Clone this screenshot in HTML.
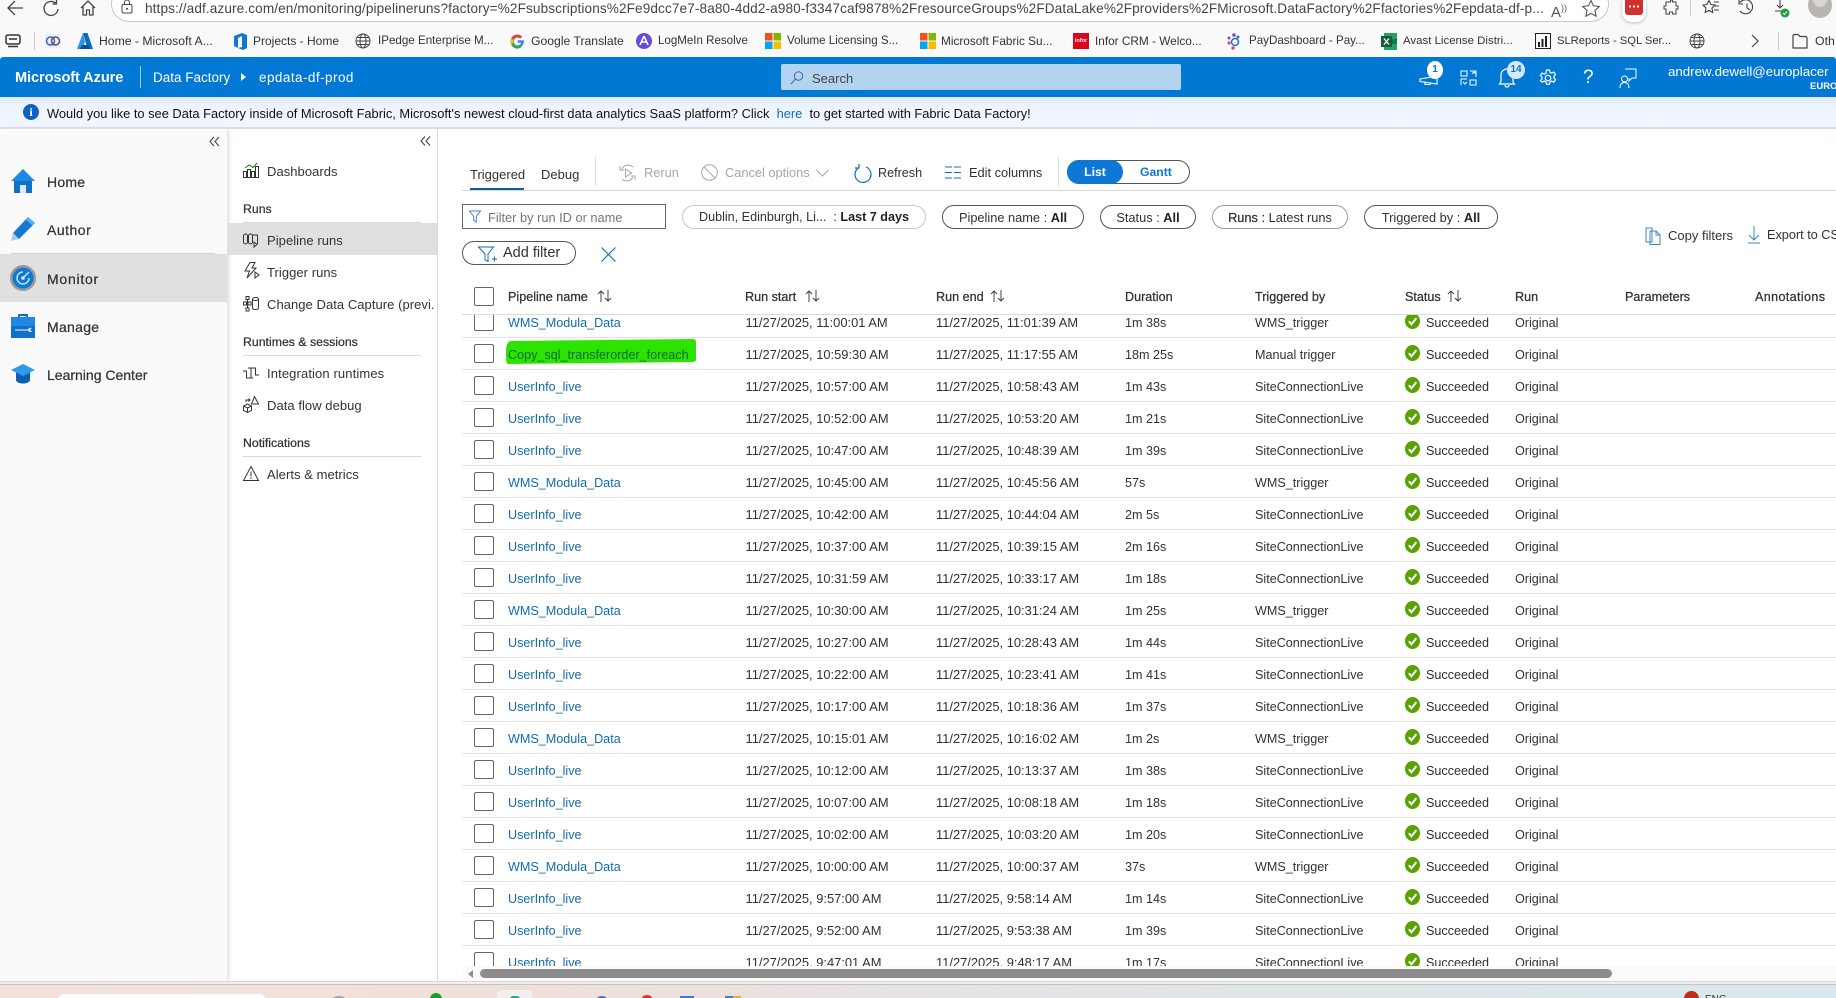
<!DOCTYPE html>
<html lang="en"><head><meta charset="utf-8"><title>Pipeline runs - Azure Data Factory</title>
<style>
*{box-sizing:border-box}
html,body{margin:0;padding:0;width:1836px;height:998px;overflow:hidden;background:#fff;font-family:"Liberation Sans",sans-serif;color:#323130}
.a{position:absolute;white-space:nowrap}
svg{position:absolute;overflow:visible}
.bm{font-size:12.3px;color:#333;top:33px;line-height:16px}
.n1{font-size:14px;left:47px;line-height:18px;color:#333;-webkit-text-stroke:.25px #333;letter-spacing:.1px}
.n2{font-size:13px;left:267px;line-height:16px;color:#333;letter-spacing:.05px}
.sec{font-size:12.3px;left:243px;line-height:16px;color:#333;-webkit-text-stroke:.25px #333}
.ln{position:absolute;left:243px;width:178px;height:1px;background:#d8d8d8}
.tb{font-size:12.8px;line-height:16px;top:165px;color:#323130}
.dis{color:#a6a6a6}
.pill{position:absolute;top:205px;height:24px;border:1px solid #555;border-radius:12px;font-size:12.8px;line-height:23px;text-align:center;white-space:nowrap;color:#323130;background:#fff}
.pill b{color:#222}
.th{font-size:12.6px;line-height:16px;top:289px;color:#323130;-webkit-text-stroke:.25px #323130}
#rows{position:absolute;left:462px;top:315px;width:1374px;height:651px;overflow:hidden}
.r{position:absolute;left:0;width:1374px;height:32px;border-bottom:1px solid #e4e4e4;font-size:12.6px;line-height:34.5px;color:#323130;white-space:nowrap}
.r span,.r a,.r i{position:absolute;top:0;font-style:normal}
.r i{left:12px;top:6px;width:20px;height:19px;border:1px solid #666;border-radius:2px;background:#fff}
.r a{left:46px;color:#1069b8}
.s{left:283.5px;font-size:12.9px}.e{left:474px;font-size:12.9px}.d{left:663px}.t{left:793px}.u{left:964px}.o{left:1053px}
.r svg{left:943px;top:7px}
</style></head><body>

<svg width="0" height="0" style="position:absolute"><defs>
<symbol id="ok" viewBox="0 0 15 16"><ellipse cx="7.5" cy="8" rx="7.5" ry="8" fill="#57a300"/><path d="M3.8 8.3l2.7 3 4.8-6.2" fill="none" stroke="#fff" stroke-width="2"/></symbol>
<symbol id="sort" viewBox="0 0 16 12"><path d="M4 12V1M1 4l3-3 3 3M11 0v11M8 8l3 3 3-3" fill="none" stroke="#444" stroke-width="1"/></symbol>
<symbol id="glb" viewBox="0 0 16 16"><g fill="none" stroke="#444"><circle cx="8" cy="8" r="7"/><ellipse cx="8" cy="8" rx="3" ry="7"/><path d="M1 8h14M2 4.5h12M2 11.5h12"/></g></symbol>
<symbol id="msf" viewBox="0 0 16 16"><rect width="7.5" height="7.5" fill="#f25022"/><rect x="8.5" width="7.5" height="7.5" fill="#7fba00"/><rect y="8.5" width="7.5" height="7.5" fill="#00a4ef"/><rect x="8.5" y="8.5" width="7.5" height="7.5" fill="#ffb900"/></symbol>
</defs></svg>

<!-- browser toolbar -->
<div class="a" style="left:0;top:0;width:1836px;height:57px;background:#f9f9f9"></div>
<svg style="left:6px;top:0" width="20" height="18" viewBox="0 0 20 18"><path d="M17 8H3M9 1L2 8l7 7" fill="none" stroke="#444" stroke-width="1.3"/></svg>
<svg style="left:42px;top:0" width="18" height="18" viewBox="0 0 18 18"><path d="M14 3.5A7 7 0 1 0 16 9M14.5 0v4h-4" fill="none" stroke="#444" stroke-width="1.3"/></svg>
<svg style="left:79px;top:0" width="18" height="16" viewBox="0 0 18 16"><path d="M2 8l7-7 7 7M4 6v9h3.500v-5h3v5H14V6" fill="none" stroke="#444" stroke-width="1.300"/></svg>
<div class="a" style="left:111px;top:-14px;width:1498px;height:36px;background:#fff;border:1px solid #c8c8c8;border-radius:18px"></div>
<svg style="left:120px;top:0" width="14" height="15" viewBox="0 0 14 15"><rect x="2" y="4.500" width="10" height="8.500" rx="1.500" fill="none" stroke="#444"/><path d="M4.500 4.500V2.500a2.500 2.500 0 0 1 5 0v2" fill="none" stroke="#444"/><circle cx="7" cy="8.800" r="1" fill="#444"/></svg>
<div class="a" style="left:145px;top:0;line-height:17px;font-size:13.6px;color:#444;letter-spacing:.11px">https://adf.azure.com/en/monitoring/pipelineruns?factory=%2Fsubscriptions%2Fe9dcc7e7-8a80-4dd2-a980-f3347caf9878%2FresourceGroups%2FDataLake%2Fproviders%2FMicrosoft.DataFactory%2Ffactories%2Fepdata-df-p...</div>
<div class="a" style="left:1551px;top:0;font-size:15px;line-height:17px;color:#555">A<span style="font-size:9px;vertical-align:6px">))</span></div>
<svg style="left:1582px;top:0" width="18" height="17" viewBox="0 0 18 17"><path d="M9 .5l2.500 5.300 5.800.7-4.300 4 1.100 5.700L9 13.400 3.900 16.200 5 10.500.7 6.500l5.800-.7z" fill="none" stroke="#555" stroke-width="1.100"/></svg>
<div class="a" style="left:1622px;top:-6px;width:24px;height:28px;border-radius:10px;background:#fff;box-shadow:0 1px 3px #bbb"></div>
<div class="a" style="left:1625px;top:0;width:18px;height:15px;background:#d32f2f;border-radius:0 0 3px 3px"></div>
<div class="a" style="left:1628px;top:5px;width:12px;height:3px;background:radial-gradient(circle,#fff 1px,transparent 1.200px) 0 0/4px 3px"></div>
<svg style="left:1663px;top:0" width="16" height="16" viewBox="0 0 16 16"><path d="M5 2h2.500V0h2v2H13v4h2v3h-2v5H9.500v-2h-3v2H3V9H1V6h2V2z" fill="none" stroke="#444"/></svg>
<div class="a" style="left:1690px;top:0;width:1px;height:16px;background:#ccc"></div>
<svg style="left:1702px;top:0" width="18" height="16" viewBox="0 0 18 16"><path d="M7 .5l2 4 4 .6-3 3 .8 4.400L7 10.400 3.200 12.500 4 8.100 1 5.100l4-.6zM12 2h5M13 6h4M12 10h5" fill="none" stroke="#444" stroke-width="1.100"/></svg>
<svg style="left:1738px;top:0" width="18" height="16" viewBox="0 0 18 16"><path d="M2 2.500A7 7 0 1 1 2 11M9 3.500V8l3 2M1 0v4h4" fill="none" stroke="#444" stroke-width="1.100"/></svg>
<svg style="left:1774px;top:0" width="20" height="19" viewBox="0 0 20 19"><path d="M6 0v8M3 5l3 3 3-3M1 11h9" fill="none" stroke="#444" stroke-width="1.100"/><circle cx="11" cy="13" r="4.500" fill="#1a9e3f"/><path d="M9 13l1.500 1.500L13 11.500" stroke="#fff" fill="none"/></svg>
<div class="a" style="left:1808px;top:-8px;width:24px;height:26px;border-radius:50%;background:#b9b5b1"></div>
<div class="a" style="left:1813px;top:-8px;width:14px;height:15px;border-radius:50%;background:#d9d7d4"></div>

<!-- bookmarks -->
<svg style="left:5px;top:34px" width="16" height="14" viewBox="0 0 16 14"><rect x="1" y="1" width="14" height="9" rx="2" fill="none" stroke="#333" stroke-width="1.500"/><path d="M4 5h8M3 12.500h10" stroke="#333" stroke-width="1.500"/></svg>
<div class="a" style="left:34px;top:32px;width:1px;height:18px;background:#ccc"></div>
<svg style="left:45px;top:34px" width="16" height="14" viewBox="0 0 16 14"><rect width="16" height="14" fill="#eef"/><circle cx="5.500" cy="7" r="4" fill="none" stroke="#36c" stroke-width="1.500"/><circle cx="10.500" cy="7" r="4" fill="none" stroke="#556" stroke-width="1.500"/></svg>
<svg style="left:77px;top:33px" width="16" height="16" viewBox="0 0 16 16"><path d="M6 0h4.500L16 16h-5.500z" fill="#0f6cbd"/><path d="M6 0L0 16h5.500L8 9z" fill="#2a94e0"/><path d="M5 12h6l2 4H3z" fill="#0a4f90"/></svg>
<div class="a bm" style="left:99px;font-size:12.2px">Home - Microsoft A...</div>
<svg style="left:232px;top:33px" width="16" height="17" viewBox="0 0 16 17"><path d="M10 0L2 3v10l4 2V5l4-2v11l-4 1 5 2 4-2V2z" fill="#0b78d4"/></svg>
<div class="a bm" style="left:253px;font-size:12px">Projects - Home</div>
<svg style="left:355px;top:33px" width="16" height="16"><use href="#glb"/></svg>
<div class="a bm" style="left:378px;font-size:11.6px">IPedge Enterprise M...</div>
<svg style="left:510px;top:34px" width="15" height="15" viewBox="0 0 15 15"><path d="M13.500 6.200H7.700v2.600h3.400c-.4 1.700-1.800 2.600-3.400 2.600a3.900 3.900 0 1 1 2.500-6.900l1.900-1.900A6.700 6.700 0 1 0 14 7.500c0-.5 0-.9-.5-1.300z" fill="#4285f4"/><path d="M1.200 4.200l2.300 1.700a3.900 3.900 0 0 1 6.700-1.300l1.900-1.900A6.700 6.700 0 0 0 1.200 4.200z" fill="#ea4335"/><path d="M1.100 10.600l2.400-1.800a3.900 3.900 0 0 0 6.300 2l2.200 1.800a6.700 6.700 0 0 1-10.900-2z" fill="#34a853"/><path d="M1.200 4.200a6.700 6.700 0 0 0-.1 6.400l2.400-1.800a3.900 3.900 0 0 1 0-2.900z" fill="#fbbc05"/></svg>
<div class="a bm" style="left:531px;font-size:12.200px">Google Translate</div>
<svg style="left:636px;top:33px" width="16" height="16" viewBox="0 0 16 16"><circle cx="8" cy="8" r="8" fill="#6a4bd6"/><path d="M8 3L4 12M8 3l4 9M5.500 9h5" stroke="#fff" stroke-width="1.500" fill="none"/></svg>
<div class="a bm" style="left:658px;font-size:11.550px">LogMeIn Resolve</div>
<svg style="left:765px;top:33px" width="16" height="16"><use href="#msf"/></svg>
<div class="a bm" style="left:787px;font-size:11.570px">Volume Licensing S...</div>
<svg style="left:920px;top:33px" width="16" height="16"><use href="#msf"/></svg>
<div class="a bm" style="left:941px;font-size:11.800px">Microsoft Fabric Su...</div>
<div class="a" style="left:1073px;top:33px;width:16px;height:16px;background:#d8051c;color:#fff;font:bold 5.500px/16px 'Liberation Sans',sans-serif;text-align:center">infor</div>
<div class="a bm" style="left:1095px;font-size:11.800px">Infor CRM - Welco...</div>
<svg style="left:1227px;top:33px" width="14" height="17" viewBox="0 0 14 17"><circle cx="7" cy="2" r="1.800" fill="#7b4bb5"/><circle cx="2" cy="5" r="1.500" fill="#7b4bb5"/><circle cx="11" cy="4" r="1.500" fill="#1b74c5"/><circle cx="2" cy="10" r="1.500" fill="#d6338a"/><circle cx="6" cy="15" r="1.600" fill="#d6338a"/><circle cx="8" cy="9" r="3.500" fill="none" stroke="#1b74c5" stroke-width="1.500"/></svg>
<div class="a bm" style="left:1249px;font-size:11.600px">PayDashboard - Pay...</div>
<svg style="left:1381px;top:33px" width="16" height="17" viewBox="0 0 16 17"><rect x="3" width="13" height="17" fill="#21a366"/><rect x="9" y="6" width="7" height="5" fill="#107c41"/><rect y="3" width="11" height="11" fill="#185c37"/><path d="M3 5.500l5 6M8 5.500l-5 6" stroke="#fff" stroke-width="1.300"/></svg>
<div class="a bm" style="left:1403px;font-size:11.450px">Avast License Distri...</div>
<svg style="left:1535px;top:33px" width="16" height="16" viewBox="0 0 16 16"><rect x=".5" y=".5" width="15" height="15" fill="#fff" stroke="#222"/><path d="M3 14V9h2v5zM6.500 14V6h2v8zM10 14V3h2v11z" fill="#222"/></svg>
<div class="a bm" style="left:1557px;font-size:11.200px">SLReports - SQL Ser...</div>
<svg style="left:1689px;top:33px" width="16" height="16"><use href="#glb"/></svg>
<svg style="left:1751px;top:34px" width="9" height="14" viewBox="0 0 9 14"><path d="M1 1l6 6-6 6" fill="none" stroke="#444" stroke-width="1.200"/></svg>
<div class="a" style="left:1778px;top:32px;width:1px;height:18px;background:#ccc"></div>
<svg style="left:1792px;top:33px" width="16" height="16" viewBox="0 0 16 16"><path d="M1 15V3a1.500 1.500 0 0 1 1.500-1.500h3.500L8 3.500h5.500A1.500 1.500 0 0 1 15 5v10z" fill="none" stroke="#444" stroke-width="1.200"/></svg>
<div class="a bm" style="left:1815px">Oth</div>

<!-- azure header -->
<div class="a" style="left:0;top:57px;width:1836px;height:40px;background:#0078d4;border-radius:3px 3px 0 0"></div>
<div class="a" style="left:15px;top:69px;font-size:14.600px;line-height:18px;color:#fff;font-weight:bold;letter-spacing:-.1px">Microsoft Azure</div>
<div class="a" style="left:140px;top:66px;width:1px;height:22px;background:#9ccbf0"></div>
<div class="a" style="left:153px;top:69px;font-size:13.500px;line-height:18px;color:#fff">Data Factory</div>
<div class="a" style="left:241px;top:73px;border-left:5px solid #fff;border-top:4.500px solid transparent;border-bottom:4.500px solid transparent"></div>
<div class="a" style="left:259px;top:69px;font-size:13.500px;line-height:18px;color:#fff;letter-spacing:.45px">epdata-df-prod</div>
<div class="a" style="left:781px;top:64px;width:400px;height:26px;background:#b3d4f1;border-radius:2px"></div>
<svg style="left:790px;top:71px" width="14" height="14" viewBox="0 0 14 14"><circle cx="8.500" cy="5" r="4.200" fill="none" stroke="#3a6ea5"/><path d="M5.500 8L1 13" stroke="#3a6ea5"/></svg>
<div class="a" style="left:812px;top:71px;font-size:13px;line-height:16px;color:#444">Search</div>
<!-- header icons -->
<svg style="left:1419px;top:66px" width="24" height="24" viewBox="0 0 24 24"><path d="M1 13l17-3v8L1 15.500zM6 15.500v3h5l1-1.500" fill="none" stroke="#fff" stroke-width="1.100"/></svg>
<div class="a" style="left:1427px;top:61px;width:16px;height:18px;border-radius:50%;background:#fff;color:#0078d4;font:bold 10px/18px 'Liberation Sans',sans-serif;text-align:center">1</div>
<svg style="left:1460px;top:70px" width="17" height="16" viewBox="0 0 17 16"><g fill="none" stroke="#fff"><path d="M1 1h6v5H1zM10 10h6v5h-6zM10 1h6v6M1 15v-6h6M12 4l2-2 2 2M7 12l-2 2-2-2"/></g></svg>
<svg style="left:1498px;top:66px" width="18" height="22" viewBox="0 0 18 22"><path d="M3 16V9a6 6 0 0 1 12 0v7l1.500 2h-15zM7 19a2 2 0 0 0 4 0" fill="none" stroke="#fff" stroke-width="1.200"/></svg>
<div class="a" style="left:1507px;top:61px;width:18px;height:18px;border-radius:50%;background:#d7e8f8;color:#0078d4;font:bold 10px/18px 'Liberation Sans',sans-serif;text-align:center">14</div>
<svg style="left:1539px;top:69px" width="18" height="18" viewBox="0 0 18 18"><g fill="none" stroke="#fff" stroke-width="1.200"><circle cx="9" cy="9" r="2.800"/><path d="M7.500 1h3l.5 2.300 1.700.8 2.100-1.100 1.700 2.500-1.600 1.700v1.800l1.600 1.700-1.700 2.500-2.100-1.100-1.700.8-.5 2.300h-3l-.5-2.300-1.700-.8-2.100 1.100L1.400 11.700 3 10V8.200L1.400 6.500 3.100 4l2.100 1.100L6.900 4.300z"/></g></svg>
<div class="a" style="left:1583px;top:66px;font-size:19px;line-height:24px;color:#fff">?</div>
<svg style="left:1619px;top:68px" width="18" height="20" viewBox="0 0 18 20"><g fill="none" stroke="#fff"><path d="M6 1h11v9h-4l-3 3v-3"/><circle cx="5.500" cy="11" r="3"/><path d="M1 20c0-4 2-5.500 4.500-5.500S10 16 10 20"/></g></svg>
<div class="a" style="left:1668px;top:63px;font-size:13.300px;line-height:18px;color:#fff">andrew.dewell@europlacer</div>
<div class="a" style="left:1810px;top:81px;font-size:9.500px;line-height:12px;color:#fff;font-weight:bold">EURO</div>

<!-- banner -->
<div class="a" style="left:0;top:97px;width:1836px;height:32px;background:linear-gradient(#dfe5ee,#eef4fd 30%,#f1f6ff);border-bottom:2px solid #d5dceb"></div>
<div class="a" style="left:23px;top:104px;width:16px;height:16px;border-radius:50%;background:#0f62c4;color:#fff;font:bold 12px/16px 'Liberation Serif',serif;text-align:center">i</div>
<div class="a" style="left:47px;top:106px;font-size:12.850px;line-height:16px;color:#111">Would you like to see Data Factory inside of Microsoft Fabric, Microsoft's newest cloud-first data analytics SaaS platform? Click&nbsp; <span style="color:#0f6cbd">here</span>&nbsp; to get started with Fabric Data Factory!</div>

<!-- left nav -->
<div class="a" style="left:0;top:129px;width:227px;height:852px;background:#fafafa;box-shadow:2px 0 4px #ddd;border-radius:0 0 0 5px"></div>
<svg style="left:209px;top:136px" width="11" height="11" viewBox="0 0 11 11"><path d="M5 1L1 5.500 5 10M10 1L6 5.500 10 10" fill="none" stroke="#444" stroke-width="1.100"/></svg>
<div class="a" style="left:0;top:254px;width:227px;height:48px;background:#e0e0e0"></div>
<div class="a" style="left:11px;top:253px;width:204px;height:1px;background:#d4d4d4"></div>
<svg style="left:11px;top:169px" width="24" height="24" viewBox="0 0 24 24"><path d="M12 0L0 12h3v12h18V12h3z" fill="#1e88e5"/><path d="M3 12h18v12H3z" fill="#1270c8"/><rect x="9" y="16" width="6" height="8" fill="#d8ecfb"/></svg>
<svg style="left:11px;top:217px" width="24" height="24" viewBox="0 0 24 24"><path d="M17 0l7 6L8 22 2 16z" fill="#1677d2"/><path d="M17 0l7 6-2.500 2.500-7-6z" fill="#58b1ee"/><path d="M2 16l6 6-8 2z" fill="#a9c9ea"/></svg>
<svg style="left:10px;top:265px" width="26" height="26" viewBox="0 0 26 26"><circle cx="13" cy="13" r="13" fill="#9a9a9a"/><circle cx="13" cy="13" r="10.500" fill="#0f78d2"/><path d="M13 13l6-6M19 13a6 6 0 1 1-6-6" fill="none" stroke="#bfe3fb" stroke-width="1.500"/><circle cx="13" cy="13" r="1.800" fill="#d5effd"/></svg>
<svg style="left:11px;top:314px" width="24" height="24" viewBox="0 0 24 24"><path d="M7 3V0h10v3h-2V2H9v1z" fill="#1270c8"/><rect y="3" width="24" height="21" fill="#1270c8"/><rect y="3" width="24" height="9" fill="#1e88e5"/><path d="M4 15.500h13a3 3 0 0 1 4-1.500l-2 1.800 2 1.800a3 3 0 0 1-4-1H4z" fill="#dbeaf7"/></svg>
<svg style="left:11px;top:364px" width="24" height="20" viewBox="0 0 24 20"><path d="M5 8v8c0 2 3.500 3.500 7 3.500s7-1.500 7-3.500V8z" fill="#0d5fae"/><path d="M12 0L0 6l12 6 12-6z" fill="#2c9bea"/><path d="M21 7v7" stroke="#d7f0ff"/></svg>
<div class="a n1" style="top:173px;letter-spacing:.25px">Home</div>
<div class="a n1" style="top:221px;letter-spacing:.5px">Author</div>
<div class="a n1" style="top:270px;letter-spacing:.75px">Monitor</div>
<div class="a n1" style="top:318px;letter-spacing:.3px">Manage</div>
<div class="a n1" style="top:366px;letter-spacing:0">Learning Center</div>

<!-- second nav -->
<div class="a" style="left:437px;top:129px;width:1px;height:852px;background:#d8d8d8"></div>
<svg style="left:420px;top:136px" width="11" height="10" viewBox="0 0 11 10"><path d="M5 .5L1 5l4 4.500M10 .5L6 5l4 4.500" fill="none" stroke="#444" stroke-width="1.100"/></svg>
<svg style="left:243px;top:162px" width="16" height="16" viewBox="0 0 16 16"><g fill="none" stroke="#333"><path d="M.5 9.500h3v6h-3zM4.500 7.500h3v8h-3zM8.500 9.500h3v6h-3zM12.500 4.500h3v11h-3z"/><path d="M2 6l4-3 4 2.500L14 1" stroke="#107c10"/></g></svg>
<div class="a n2" style="top:164px">Dashboards</div>
<div class="a sec" style="top:201px">Runs</div>
<div class="ln" style="top:222px"></div>
<div class="a" style="left:227px;top:223px;width:210px;height:32px;background:#e0e0e0"></div>
<svg style="left:243px;top:233px" width="16" height="15" viewBox="0 0 16 15"><g fill="none" stroke="#333"><rect x=".5" y="1" width="4" height="10" rx="2"/><rect x="5.500" y="1" width="4" height="10" rx="2"/><path d="M9.500 2h5v9M11 9v5l3-2.500z"/></g></svg>
<div class="a n2" style="top:233px">Pipeline runs</div>
<svg style="left:244px;top:262px" width="15" height="17" viewBox="0 0 15 17"><g fill="none" stroke="#333"><path d="M6 .5h5L8 6h4L3 16l2.500-7H1z"/><path d="M11 10v6l4-3z"/></g></svg>
<div class="a n2" style="top:265px">Trigger runs</div>
<svg style="left:243px;top:296px" width="16" height="16" viewBox="0 0 16 16"><g fill="none" stroke="#333"><path d="M3 .5h3v3H3zM.5 6h3v3h-3zM5 6h3v3H5zM3 12h3v3H3zM4.500 3.500V12"/><ellipse cx="12.500" cy="3" rx="3" ry="1.500"/><path d="M9.500 3v9c0 2 6 2 6 0V3"/></g></svg>
<div class="a n2" style="top:297px;width:168px;overflow:hidden">Change Data Capture (previ...</div>
<div class="a sec" style="top:334px">Runtimes &amp; sessions</div>
<div class="ln" style="top:355px"></div>
<svg style="left:243px;top:367px" width="16" height="12" viewBox="0 0 16 12"><path d="M0 4h3.500v7H8V1h4.500v7H16M5 1h7M3.500 11H10" fill="none" stroke="#333"/></svg>
<div class="a n2" style="top:366px;letter-spacing:.12px">Integration runtimes</div>
<svg style="left:243px;top:396px" width="16" height="17" viewBox="0 0 16 17"><g fill="none" stroke="#333"><path d="M11.500.5L15.500 8h-7zM4.500 8l4 2v4.500l-4 2-4-2V10zM.5 10l4 2 4-2M4.500 12v4.500M3 6V4h4M5.500 2.500L7 4 5.500 5.500"/></g></svg>
<div class="a n2" style="top:398px">Data flow debug</div>
<div class="a sec" style="top:435px">Notifications</div>
<div class="ln" style="top:456px"></div>
<svg style="left:243px;top:466px" width="16" height="15" viewBox="0 0 16 15"><path d="M8 .5L15.500 14.500H.5zM8 5.500v5M8 11.500v1.500" fill="none" stroke="#333"/></svg>
<div class="a n2" style="top:467px">Alerts &amp; metrics</div>

<!-- toolbar -->
<div class="a tb" style="left:470px;top:167px;font-size:13px">Triggered</div>
<div class="a" style="left:470px;top:188px;width:54px;height:2px;background:#0f5c9e"></div>
<div class="a tb" style="left:541px;top:167px;font-size:13px">Debug</div>
<div class="a" style="left:595px;top:157px;width:1px;height:29px;background:#ddd"></div>
<div class="a" style="left:462px;top:190px;width:1374px;height:1px;background:#d6d6d6"></div>
<svg style="left:619px;top:164px" width="17" height="18" viewBox="0 0 17 18"><g fill="none" stroke="#a6a6a6"><path d="M3 5a7 7 0 0 1 11-2M1 2v4h4M14 13a7 7 0 0 1-11 2M16 16v-4h-4M6.500 5v8l6-4z"/></g></svg>
<div class="a tb dis" style="left:644px">Rerun</div>
<svg style="left:701px;top:164px" width="17" height="17" viewBox="0 0 17 17"><g fill="none" stroke="#a6a6a6"><circle cx="8.500" cy="8.500" r="7.800"/><path d="M3 3l11 11"/></g></svg>
<div class="a tb dis" style="left:725px">Cancel options</div>
<svg style="left:816px;top:169px" width="13" height="8" viewBox="0 0 13 8"><path d="M.5 1l6 6 6-6" fill="none" stroke="#a6a6a6"/></svg>
<svg style="left:854px;top:164px" width="17" height="18" viewBox="0 0 17 18"><path d="M5 3.500a8 8 0 1 0 7-.5M5 0v4H1" fill="none" stroke="#0f6cbd" stroke-width="1.200"/></svg>
<div class="a tb" style="left:878px;font-size:12.6px">Refresh</div>
<svg style="left:945px;top:166px" width="16" height="13" viewBox="0 0 16 13"><path d="M0 1h7M9 1h7M0 6.500h7M9 6.500h7M0 12h7M9 12h7" stroke="#0f6cbd"/></svg>
<div class="a tb" style="left:969px">Edit columns</div>
<div class="a" style="left:1058px;top:157px;width:1px;height:29px;background:#ddd"></div>
<div class="a" style="left:1067px;top:160px;width:123px;height:24px;border:1px solid #555;border-radius:12px;background:#fff"></div>
<div class="a" style="left:1067px;top:160px;width:56px;height:24px;border-radius:12px;background:#0f78d4;color:#fff;font:bold 12.200px/24.500px 'Liberation Sans',sans-serif;text-align:center">List</div>
<div class="a" style="left:1140px;top:160px;font:bold 12.200px/24.500px 'Liberation Sans',sans-serif;color:#0f78d4">Gantt</div>

<!-- filters -->
<div class="a" style="left:462px;top:204px;width:204px;height:25px;border:1px solid #666;background:#fff"></div>
<svg style="left:469px;top:210px" width="12" height="13" viewBox="0 0 12 13"><path d="M.5 1h11L7.300 6.500V12L4.700 10.500v-4z" fill="none" stroke="#3b86c6"/></svg>
<div class="a" style="left:488px;top:210px;font-size:12.800px;line-height:16px;color:#757575">Filter by run ID or name</div>
<div class="pill" style="left:682px;width:244px;border-color:#c8c8c8;font-size:12.600px">Dublin, Edinburgh, Li... &nbsp;: <b>Last 7 days</b></div>
<div class="pill" style="left:942px;width:142px">Pipeline name : <b>All</b></div>
<div class="pill" style="left:1100px;width:96px">Status : <b>All</b></div>
<div class="pill" style="left:1212px;width:136px;border-color:#9a9a9a"><span style="-webkit-text-stroke:.25px #333">Runs :</span> Latest runs</div>
<div class="pill" style="left:1364px;width:134px">Triggered by : <b>All</b></div>
<div class="pill" style="left:462px;top:241px;width:114px;font-size:14.500px;text-align:left;padding-left:40px">Add filter</div>
<svg style="left:478px;top:246px" width="20" height="17" viewBox="0 0 20 17"><path d="M.5 1h15L10 8v7.500L7 14V8zM14 13h5M16.500 10.500v5" fill="none" stroke="#0f6cbd"/></svg>
<svg style="left:601px;top:247px" width="15" height="15" viewBox="0 0 15 15"><path d="M.5.500l14 14M14.500.500l-14 14" stroke="#0f6cbd" stroke-width="1.100"/></svg>
<svg style="left:1645px;top:227px" width="16" height="18" viewBox="0 0 16 18"><path d="M1 1h6v14H1zM5 4h6l4 4v9.500H5zM11 4v4h4" fill="none" stroke="#3b86c6"/></svg>
<div class="a" style="left:1668px;top:228px;font-size:13px;line-height:16px">Copy filters</div>
<svg style="left:1748px;top:226px" width="12" height="18" viewBox="0 0 12 18"><path d="M6 0v14M1 9l5 5 5-5M0 17h12" fill="none" stroke="#3b86c6"/></svg>
<div class="a" style="left:1767px;top:227px;font-size:12.700px;line-height:16px">Export to CSV</div>

<!-- table head -->
<div class="a" style="left:474px;top:287px;width:20px;height:19px;border:1px solid #666;border-radius:2px"></div>
<div class="a th" style="left:508px">Pipeline name</div><svg style="left:597px;top:290px" width="16" height="12"><use href="#sort"/></svg>
<div class="a th" style="left:745px">Run start</div><svg style="left:805px;top:290px" width="16" height="12"><use href="#sort"/></svg>
<div class="a th" style="left:936px">Run end</div><svg style="left:990px;top:290px" width="16" height="12"><use href="#sort"/></svg>
<div class="a th" style="left:1125px">Duration</div>
<div class="a th" style="left:1255px">Triggered by</div>
<div class="a th" style="left:1405px">Status</div><svg style="left:1447px;top:290px" width="16" height="12"><use href="#sort"/></svg>
<div class="a th" style="left:1515px">Run</div>
<div class="a th" style="left:1625px">Parameters</div>
<div class="a th" style="left:1755px;letter-spacing:.35px">Annotations</div>
<div class="a" style="left:462px;top:314px;width:1374px;height:1px;background:#dcdcdc"></div>

<!-- rows -->
<div id="rows">
<div class="r" style="top:-9px"><i></i><a>WMS_Modula_Data</a><span class="s">11/27/2025, 11:00:01 AM</span><span class="e">11/27/2025, 11:01:39 AM</span><span class="d">1m 38s</span><span class="t">WMS_trigger</span><svg width="15" height="16"><use href="#ok"/></svg><span class="u">Succeeded</span><span class="o">Original</span></div>
<div class="r" style="top:23px"><i></i><span style="left:44px;top:2px;width:190px;height:23px;background:#2de400;border-radius:5px 3px 4px 2px/9px 3px 2px 6px;transform:skewY(-.6deg)"></span><a style="color:#0c6a3a">Copy_sql_transferorder_foreach</a><span class="s">11/27/2025, 10:59:30 AM</span><span class="e">11/27/2025, 11:17:55 AM</span><span class="d">18m 25s</span><span class="t">Manual trigger</span><svg width="15" height="16"><use href="#ok"/></svg><span class="u">Succeeded</span><span class="o">Original</span></div>
<div class="r" style="top:55px"><i></i><a>UserInfo_live</a><span class="s">11/27/2025, 10:57:00 AM</span><span class="e">11/27/2025, 10:58:43 AM</span><span class="d">1m 43s</span><span class="t">SiteConnectionLive</span><svg width="15" height="16"><use href="#ok"/></svg><span class="u">Succeeded</span><span class="o">Original</span></div>
<div class="r" style="top:87px"><i></i><a>UserInfo_live</a><span class="s">11/27/2025, 10:52:00 AM</span><span class="e">11/27/2025, 10:53:20 AM</span><span class="d">1m 21s</span><span class="t">SiteConnectionLive</span><svg width="15" height="16"><use href="#ok"/></svg><span class="u">Succeeded</span><span class="o">Original</span></div>
<div class="r" style="top:119px"><i></i><a>UserInfo_live</a><span class="s">11/27/2025, 10:47:00 AM</span><span class="e">11/27/2025, 10:48:39 AM</span><span class="d">1m 39s</span><span class="t">SiteConnectionLive</span><svg width="15" height="16"><use href="#ok"/></svg><span class="u">Succeeded</span><span class="o">Original</span></div>
<div class="r" style="top:151px"><i></i><a>WMS_Modula_Data</a><span class="s">11/27/2025, 10:45:00 AM</span><span class="e">11/27/2025, 10:45:56 AM</span><span class="d">57s</span><span class="t">WMS_trigger</span><svg width="15" height="16"><use href="#ok"/></svg><span class="u">Succeeded</span><span class="o">Original</span></div>
<div class="r" style="top:183px"><i></i><a>UserInfo_live</a><span class="s">11/27/2025, 10:42:00 AM</span><span class="e">11/27/2025, 10:44:04 AM</span><span class="d">2m 5s</span><span class="t">SiteConnectionLive</span><svg width="15" height="16"><use href="#ok"/></svg><span class="u">Succeeded</span><span class="o">Original</span></div>
<div class="r" style="top:215px"><i></i><a>UserInfo_live</a><span class="s">11/27/2025, 10:37:00 AM</span><span class="e">11/27/2025, 10:39:15 AM</span><span class="d">2m 16s</span><span class="t">SiteConnectionLive</span><svg width="15" height="16"><use href="#ok"/></svg><span class="u">Succeeded</span><span class="o">Original</span></div>
<div class="r" style="top:247px"><i></i><a>UserInfo_live</a><span class="s">11/27/2025, 10:31:59 AM</span><span class="e">11/27/2025, 10:33:17 AM</span><span class="d">1m 18s</span><span class="t">SiteConnectionLive</span><svg width="15" height="16"><use href="#ok"/></svg><span class="u">Succeeded</span><span class="o">Original</span></div>
<div class="r" style="top:279px"><i></i><a>WMS_Modula_Data</a><span class="s">11/27/2025, 10:30:00 AM</span><span class="e">11/27/2025, 10:31:24 AM</span><span class="d">1m 25s</span><span class="t">WMS_trigger</span><svg width="15" height="16"><use href="#ok"/></svg><span class="u">Succeeded</span><span class="o">Original</span></div>
<div class="r" style="top:311px"><i></i><a>UserInfo_live</a><span class="s">11/27/2025, 10:27:00 AM</span><span class="e">11/27/2025, 10:28:43 AM</span><span class="d">1m 44s</span><span class="t">SiteConnectionLive</span><svg width="15" height="16"><use href="#ok"/></svg><span class="u">Succeeded</span><span class="o">Original</span></div>
<div class="r" style="top:343px"><i></i><a>UserInfo_live</a><span class="s">11/27/2025, 10:22:00 AM</span><span class="e">11/27/2025, 10:23:41 AM</span><span class="d">1m 41s</span><span class="t">SiteConnectionLive</span><svg width="15" height="16"><use href="#ok"/></svg><span class="u">Succeeded</span><span class="o">Original</span></div>
<div class="r" style="top:375px"><i></i><a>UserInfo_live</a><span class="s">11/27/2025, 10:17:00 AM</span><span class="e">11/27/2025, 10:18:36 AM</span><span class="d">1m 37s</span><span class="t">SiteConnectionLive</span><svg width="15" height="16"><use href="#ok"/></svg><span class="u">Succeeded</span><span class="o">Original</span></div>
<div class="r" style="top:407px"><i></i><a>WMS_Modula_Data</a><span class="s">11/27/2025, 10:15:01 AM</span><span class="e">11/27/2025, 10:16:02 AM</span><span class="d">1m 2s</span><span class="t">WMS_trigger</span><svg width="15" height="16"><use href="#ok"/></svg><span class="u">Succeeded</span><span class="o">Original</span></div>
<div class="r" style="top:439px"><i></i><a>UserInfo_live</a><span class="s">11/27/2025, 10:12:00 AM</span><span class="e">11/27/2025, 10:13:37 AM</span><span class="d">1m 38s</span><span class="t">SiteConnectionLive</span><svg width="15" height="16"><use href="#ok"/></svg><span class="u">Succeeded</span><span class="o">Original</span></div>
<div class="r" style="top:471px"><i></i><a>UserInfo_live</a><span class="s">11/27/2025, 10:07:00 AM</span><span class="e">11/27/2025, 10:08:18 AM</span><span class="d">1m 18s</span><span class="t">SiteConnectionLive</span><svg width="15" height="16"><use href="#ok"/></svg><span class="u">Succeeded</span><span class="o">Original</span></div>
<div class="r" style="top:503px"><i></i><a>UserInfo_live</a><span class="s">11/27/2025, 10:02:00 AM</span><span class="e">11/27/2025, 10:03:20 AM</span><span class="d">1m 20s</span><span class="t">SiteConnectionLive</span><svg width="15" height="16"><use href="#ok"/></svg><span class="u">Succeeded</span><span class="o">Original</span></div>
<div class="r" style="top:535px"><i></i><a>WMS_Modula_Data</a><span class="s">11/27/2025, 10:00:00 AM</span><span class="e">11/27/2025, 10:00:37 AM</span><span class="d">37s</span><span class="t">WMS_trigger</span><svg width="15" height="16"><use href="#ok"/></svg><span class="u">Succeeded</span><span class="o">Original</span></div>
<div class="r" style="top:567px"><i></i><a>UserInfo_live</a><span class="s">11/27/2025, 9:57:00 AM</span><span class="e">11/27/2025, 9:58:14 AM</span><span class="d">1m 14s</span><span class="t">SiteConnectionLive</span><svg width="15" height="16"><use href="#ok"/></svg><span class="u">Succeeded</span><span class="o">Original</span></div>
<div class="r" style="top:599px"><i></i><a>UserInfo_live</a><span class="s">11/27/2025, 9:52:00 AM</span><span class="e">11/27/2025, 9:53:38 AM</span><span class="d">1m 39s</span><span class="t">SiteConnectionLive</span><svg width="15" height="16"><use href="#ok"/></svg><span class="u">Succeeded</span><span class="o">Original</span></div>
<div class="r" style="top:631px"><i></i><a>UserInfo_live</a><span class="s">11/27/2025, 9:47:01 AM</span><span class="e">11/27/2025, 9:48:17 AM</span><span class="d">1m 17s</span><span class="t">SiteConnectionLive</span><svg width="15" height="16"><use href="#ok"/></svg><span class="u">Succeeded</span><span class="o">Original</span></div>
</div>

<!-- scrollbar -->
<div class="a" style="left:463px;top:966px;width:1373px;height:15px;background:#fbfbfb"></div>
<div class="a" style="left:468px;top:970px;border-right:5px solid #8c8c8c;border-top:4px solid transparent;border-bottom:4px solid transparent"></div>
<div class="a" style="left:480px;top:969px;width:1132px;height:9px;background:#8c8c8c;border-radius:5px"></div>

<!-- bottom edge + taskbar -->
<div class="a" style="left:0;top:981px;width:1836px;height:4px;background:#efefef;border-top:1px solid #d9d9d9;border-bottom:1px solid #c4c4c4"></div>
<div class="a" style="left:0;top:985px;width:1836px;height:13px;background:linear-gradient(90deg,#f4e2da,#f0dfda 30%,#e3e3e6 55%,#dfe6e8 75%,#d8e8ee);overflow:hidden">
<div class="a" style="left:58px;top:9px;width:208px;height:14px;background:#fff;border-radius:8px"></div>
<div class="a" style="left:332px;top:11px;width:14px;height:8px;border-radius:50%;background:#9aa3a8"></div>
<div class="a" style="left:430px;top:8px;width:12px;height:12px;border-radius:50%;background:#12a02e"></div>
<div class="a" style="left:497px;top:5px;width:35px;height:14px;background:#f2eeee;border-radius:4px 4px 0 0"></div>
<div class="a" style="left:510px;top:11px;width:10px;height:6px;background:#26a69a;border-radius:3px"></div>
<div class="a" style="left:597px;top:11px;width:10px;height:6px;border-radius:50%;background:#3b6fd1"></div>
<div class="a" style="left:642px;top:10px;width:10px;height:6px;border-radius:50%;background:#d83b2b"></div>
<div class="a" style="left:680px;top:11px;width:14px;height:6px;background:#2f7fd1"></div>
<div class="a" style="left:725px;top:11px;width:8px;height:6px;background:#3b7fd1"></div>
<div class="a" style="left:733px;top:11px;width:8px;height:6px;background:#e2b42c"></div>
<div class="a" style="left:1684px;top:6px;width:15px;height:15px;border-radius:50%;background:#c42b1c"></div>
<div class="a" style="left:1705px;top:9px;font-size:10px;line-height:12px;color:#333">ENG</div>
</div>
</body></html>
